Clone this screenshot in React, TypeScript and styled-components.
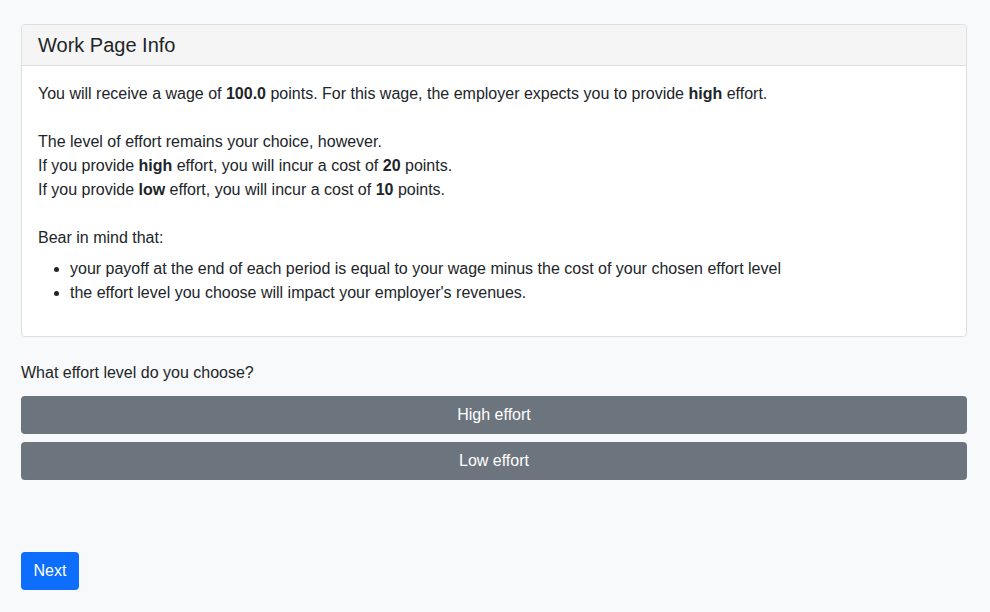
import React from "react";
import styled, { createGlobalStyle } from "styled-components";

const GlobalStyle = createGlobalStyle`
  body {
    margin: 0;
    background: #f8f9fa;
    color: #212529;
    font-family: "Liberation Sans", Arial, sans-serif;
    font-size: 16px;
    line-height: 24px;
  }
`;

const Page = styled.div`
  padding: 24px 23px 22px 21px;
`;

const Card = styled.div`
  background: #fff;
  border: 1px solid #dfdfdf;
  border-radius: 4px;
`;

const CardHeader = styled.div`
  background: #f5f5f5;
  border-bottom: 1px solid #dfdfdf;
  border-radius: 4px 4px 0 0;
  padding: 8px 16px;
`;

const Title = styled.h5`
  margin: 0;
  font-size: 20px;
  font-weight: 400;
  line-height: 24px;
`;

const CardBody = styled.div`
  padding: 16px 16px 15px;
`;

const Para = styled.p`
  margin: 0;
`;

const List = styled.ul`
  margin: 7px 0 16px;
  padding-left: 32px;
`;

const Question = styled.p`
  margin: 24px 0 11px;
`;

const Choices = styled.div`
  display: flex;
  flex-direction: column;
  gap: 8px;
`;

const Button = styled.button<{ $primary?: boolean }>`
  display: block;
  font-family: inherit;
  font-size: 16px;
  line-height: 24px;
  padding: 6px 12px;
  height: 38px;
  border: none;
  border-radius: 4px;
  color: #fff;
  cursor: pointer;
  background: ${(p) => (p.$primary ? "#0d6efd" : "#6c757d")};
  width: ${(p) => (p.$primary ? "58px" : "100%")};
`;

const Footer = styled.div`
  margin-top: 72px;
`;

export default function App() {
  return (
    <>
      <GlobalStyle />
      <Page>
        <Card>
          <CardHeader>
            <Title>Work Page Info</Title>
          </CardHeader>
          <CardBody>
            <Para>
              You will receive a wage of <b>100.0</b> points. For this wage, the
              employer expects you to provide <b>high</b> effort.
              <br />
              <br />
              The level of effort remains your choice, however.
              <br />
              If you provide <b>high</b> effort, you will incur a cost of{" "}
              <b>20</b> points.
              <br />
              If you provide <b>low</b> effort, you will incur a cost of{" "}
              <b>10</b> points.
              <br />
              <br />
              Bear in mind that:
            </Para>
            <List>
              <li>
                your payoff at the end of each period is equal to your wage
                minus the cost of your chosen effort level
              </li>
              <li>
                the effort level you choose will impact your employer's
                revenues.
              </li>
            </List>
          </CardBody>
        </Card>
        <Question>What effort level do you choose?</Question>
        <Choices>
          <Button>High effort</Button>
          <Button>Low effort</Button>
        </Choices>
        <Footer>
          <Button $primary>Next</Button>
        </Footer>
      </Page>
    </>
  );
}
